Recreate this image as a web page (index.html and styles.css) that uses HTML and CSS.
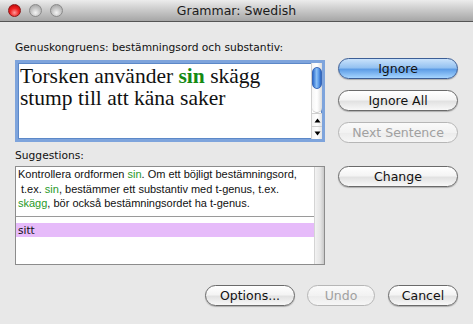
FILE: index.html
```html
<!DOCTYPE html>
<html>
<head>
<meta charset="utf-8">
<link rel="stylesheet" href="styles.css">
</head>
<body>
<div class="window">
  <div class="titlebar">
    <div class="lights">
      <span class="light close"></span>
      <span class="light"></span>
      <span class="light"></span>
    </div>
    <div class="title">Grammar: Swedish</div>
  </div>
  <div class="main">
    <div class="left">
      <div class="label first">Genuskongruens: bestämningsord och substantiv:</div>
      <div class="textbox">
        <div class="sentence">Torsken använder <b class="hl">sin</b> skägg stump till att käna saker</div>
        <div class="vscroll">
          <div class="track"><div class="thumb"></div></div>
          <div class="arrow up"><svg width="7" height="5" viewBox="0 0 7 5"><path d="M3.5 0.5L6.5 4.5H0.5Z" fill="#000"/></svg></div>
          <div class="arrow down"><svg width="7" height="5" viewBox="0 0 7 5"><path d="M0.5 0.5H6.5L3.5 4.5Z" fill="#000"/></svg></div>
        </div>
      </div>
      <div class="label second">Suggestions:</div>
      <div class="suggest">
        <div class="list">
          <div class="desc">Kontrollera ordformen <span class="g">sin</span>. Om ett böjligt bestämningsord,<br><span class="ind">t.ex. <span class="g">sin</span>, bestämmer ett substantiv med t-genus, t.ex.</span><br><span class="g">skägg</span>, bör också bestämningsordet ha t-genus.</div>
          <div class="sep"></div>
          <div class="item sel">sitt</div>
        </div>
        <div class="sidebar"></div>
      </div>
    </div>
    <div class="right">
      <button class="btn default">Ignore</button>
      <button class="btn">Ignore All</button>
      <button class="btn disabled">Next Sentence</button>
      <button class="btn change">Change</button>
    </div>
  </div>
  <div class="bottom">
    <button class="btn options">Options...</button>
    <button class="btn disabled undo">Undo</button>
    <button class="btn cancel">Cancel</button>
  </div>
</div>
</body>
</html>
```
FILE: styles.css
```css
* { box-sizing: border-box; }
html, body { margin: 0; padding: 0; }
body { width: 473px; height: 324px; overflow: hidden; background: #e8e8e8; font-family: "DejaVu Sans", sans-serif; }
.window { width: 473px; height: 324px; background: #e8e8e8; display: flex; flex-direction: column; }

.titlebar {
  height: 22px; flex: none; position: relative;
  background: linear-gradient(#ececec, #c8c8c8 50%, #a6a6a6);
  border-bottom: 1px solid #555;
  display: flex; align-items: center; justify-content: center;
}
.lights { position: absolute; left: 8px; top: 4px; display: flex; gap: 8px; }
.light {
  width: 13px; height: 13px; border-radius: 50%;
  background: radial-gradient(circle at 50% 70%, #f4f4f4 0%, #c8c8c8 45%, #9a9a9a 100%);
  border: 1px solid #8a8a8a;
}
.light.close {
  background: radial-gradient(circle at 50% 70%, #ff9b9b 0%, #f02424 45%, #b00000 100%);
  border-color: #8c1818;
}
.title { font-size: 12.5px; color: #1a1a1a; }

.main { display: flex; padding: 0 15px; gap: 13px; }
.left { width: 310px; display: flex; flex-direction: column; }
.right { width: 120px; display: flex; flex-direction: column; padding-top: 36px; gap: 11px; }

.label { font-size: 10.7px; line-height: 13px; color: #111; white-space: nowrap; }
.label.first { margin-top: 19px; }
.label.second { margin-top: 7px; }

.textbox {
  margin-top: 6px; height: 82px; background: #fff;
  border: 3px solid #7ea4dc; box-shadow: inset 0 0 0 1px #5c88c8;
  display: flex;
}
.sentence {
  flex: 1; font-family: "Liberation Serif", serif; font-size: 21.5px; line-height: 22px;
  color: #111; padding: 2px 0 0 2px;
}
.hl { color: #148a14; }
.vscroll { width: 11px; display: flex; flex-direction: column; border-left: 1px solid #d0d0d0; }
.track { flex: 1; background: linear-gradient(90deg, #f6f6f6, #ffffff 50%, #dcdcdc); padding-top: 4px; border-bottom: 1px solid #c8c8c8; border-bottom-left-radius: 5px; border-bottom-right-radius: 5px; }
.thumb {
  width: 10px; height: 22px; margin: 0 auto; border-radius: 5px;
  background: linear-gradient(90deg, #2d6ecf, #8dc1f6 45%, #5d9cea 70%, #2a62be);
  border: 1px solid #3a68b8;
}
.arrow { height: 13px; display: flex; align-items: center; justify-content: center; background: linear-gradient(90deg, #f4f4f4, #fff 50%, #e4e4e4); border-top: 1px solid #cfcfcf; }

.suggest {
  margin-top: 4px; height: 99px; background: #fff; border: 1px solid #8c8c8c;
  display: flex;
}
.list { flex: 1; display: flex; flex-direction: column; }
.desc { font-family: "Liberation Sans", sans-serif; font-size: 11px; line-height: 14.5px; color: #111; padding: 0 0 0 2px; white-space: nowrap; height: 49px; }
.ind { padding-left: 3px; }
.g { color: #2a9a2a; }
.sep { height: 1px; background: #9a9a9a; }
.item { margin-top: 6px; height: 14px; font-size: 10.5px; line-height: 14px; padding-left: 2px; color: #111; }
.item.sel { background: #e6bbfa; }
.sidebar { width: 10px; background: linear-gradient(90deg, #f2f2f2, #e4e4e4 60%, #c8c8c8); border-left: 1px solid #d4d4d4; }

.btn {
  height: 21px; border-radius: 11px; border: 1px solid #6a6a6a; padding: 0;
  font-family: "DejaVu Sans", sans-serif; font-size: 12.5px; color: #111;
  background: linear-gradient(#ffffff, #f4f4f4 45%, #e2e2e2 55%, #f8f8f8);
  box-shadow: 0 1px 1px rgba(0,0,0,0.25);
}
.btn.default {
  border-color: #3c5e96;
  background: linear-gradient(#c9e2fb, #95c2f1 45%, #5e9de6 55%, #a6d5ff);
}
.btn.disabled { border-color: #b6b6b6; color: #a0a0a0; background: linear-gradient(#fafafa, #f2f2f2 50%, #ececec 55%, #f6f6f6); box-shadow: none; }
.btn.change { margin-top: 12px; }

.bottom { display: flex; justify-content: flex-end; padding: 0 15px; margin-top: 20px; gap: 12px; }
.options { width: 90px; }
.undo { width: 68px; }
.cancel { width: 70px; margin-left: 1px; }
```
